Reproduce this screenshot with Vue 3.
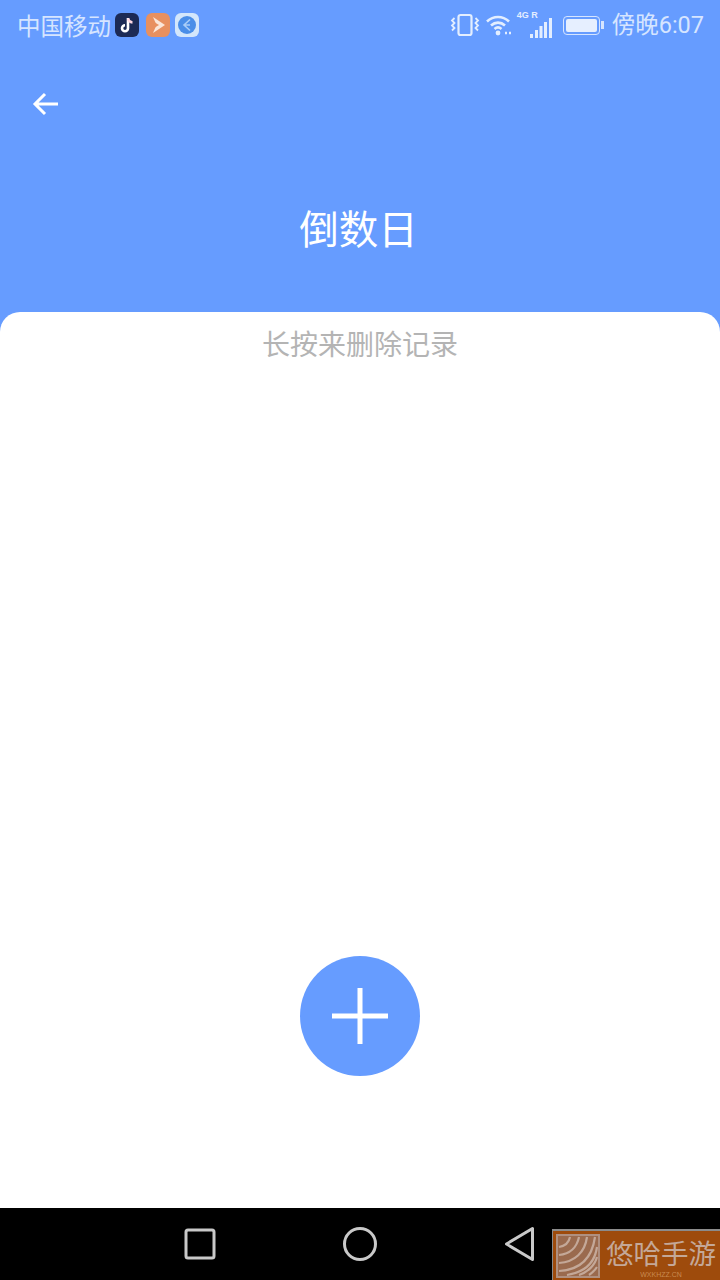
<script setup>
// Countdown list screen, empty state
const carrier = '中国移动'
const clock = '傍晚6:07'
</script>

<template>
  <div class="screen">
    <header class="head">
      <div class="status">
        <div class="status-left">
          <span class="status-text">{{ carrier }}</span>
          <span class="app-icon tiktok">
            <svg viewBox="0 0 24 24" width="24" height="24">
              <path d="M13 5v10.200a3 3 0 1 1-3-3" fill="none" stroke="#fff" stroke-width="2.600" />
              <path d="M13 5.500c.5 2.400 2 3.800 4.500 4" fill="none" stroke="#ffd9e4" stroke-width="2.400" />
            </svg>
          </span>
          <span class="app-icon video">
            <svg viewBox="0 0 24 24" width="24" height="24">
              <path d="M7 4l12 8-12 8 3.500-8z" fill="#fbe6d8" />
              <path d="M8 9l5 3-5 3z" fill="#e8905f" />
            </svg>
          </span>
          <span class="app-icon browser">
            <svg viewBox="0 0 24 24" width="24" height="24">
              <circle cx="12" cy="12" r="9" fill="#4a8ee8" />
              <path d="M15 6.500L9 12l6 5.500M15 12h-5" fill="none" stroke="#a9cdf7" stroke-width="1.600" />
            </svg>
          </span>
        </div>
        <div class="status-right">
          <svg class="ico-vibrate" viewBox="0 0 30 24" width="30" height="24">
            <rect x="8.500" y="2" width="13" height="20" rx="2" fill="none" stroke="#e3eeff" stroke-width="2.200" />
            <path d="M4.500 5l-2.500 2.500 2.500 2.500-2.500 2.500 2.500 2.500-2.500 2.500M25.500 5l2.500 2.500-2.500 2.500 2.500 2.500-2.500 2.500 2.500 2.500" fill="none" stroke="#e3eeff" stroke-width="1.800" />
          </svg>
          <svg class="ico-wifi" viewBox="0 0 28 24" width="28" height="24">
            <path d="M2 8.500c6.500-6 15.500-6 22 0M6 12.500c4.200-3.800 9.800-3.800 14 0M9.500 16c2.200-2 4.800-2 7 0" fill="none" stroke="#e3eeff" stroke-width="2.600" />
            <circle cx="13" cy="20" r="2.400" fill="#e3eeff" />
            <path d="M20 20h2M24 20h2" stroke="#e3eeff" stroke-width="2.400" />
          </svg>
          <div class="signal">
            <span class="net">4G R</span>
            <svg viewBox="0 0 24 24" width="24" height="24">
              <path d="M2.500 22v-4M7.500 22v-8M12 22v-12M16.500 22v-16M21.500 22v-20" stroke="#e3eeff" stroke-width="3" fill="none" />
            </svg>
          </div>
          <div class="battery">
            <span class="battery-body"><span class="battery-fill"></span></span>
            <span class="battery-cap"></span>
          </div>
          <span class="status-text">{{ clock }}</span>
        </div>
      </div>
      <button type="button" class="back" aria-label="返回">
        <svg viewBox="0 0 30 30" width="30" height="30">
          <path d="M28 15H5M15 5L5 15l10 10" fill="none" stroke="#fff" stroke-width="3" />
        </svg>
      </button>
      <h1 class="title">倒数日</h1>
    </header>

    <main class="card">
      <p class="hint">长按来删除记录</p>
      <button type="button" class="add" aria-label="添加">
        <svg viewBox="0 0 120 120" width="120" height="120">
          <path d="M60 32v56M32 60h56" stroke="#fff" stroke-width="5" />
        </svg>
      </button>
    </main>

    <nav class="nav">
      <svg viewBox="0 0 32 32" width="32" height="32">
        <rect x="2" y="2" width="28" height="28" rx="2" fill="none" stroke="#c9c9c9" stroke-width="3" />
      </svg>
      <svg viewBox="0 0 36 36" width="36" height="36">
        <circle cx="18" cy="18" r="15.500" fill="none" stroke="#c9c9c9" stroke-width="3" />
      </svg>
      <svg viewBox="0 0 32 36" width="32" height="36">
        <path d="M28.500 2.500v31L2.500 18z" fill="none" stroke="#c9c9c9" stroke-width="3" stroke-linejoin="round" />
      </svg>
    </nav>

    <div class="mark">
      <svg class="mark-logo" viewBox="0 0 44 44" width="44" height="44">
        <rect x="1" y="1" width="42" height="42" fill="#9a6a4e" stroke="#b09080" stroke-width="2" />
        <path d="M3 13C9 12 13 8 14 3M3 21C14 20 21 13 23 3M3 29C19 28 29 18 31 3M3 37C24 36 36 24 39 3M11 41C30 38 39 28 41 13M23 41C32 38 39 31 41 23M33 41C36 39 39 36 41 33" fill="none" stroke="#c4a898" stroke-width="2.200" />
      </svg>
      <div class="mark-text">
        <span class="mark-name">悠哈手游</span>
        <span class="mark-url">WXKHZZ.CN</span>
      </div>
    </div>
  </div>
</template>

<style scoped>
.screen {
  position: relative;
  display: flex;
  flex-direction: column;
  width: 720px;
  height: 1280px;
  overflow: hidden;
  background: #669cff;
  font-family: "Noto Sans CJK SC", "Liberation Sans", sans-serif;
}

.head {
  display: flex;
  flex-direction: column;
  height: 312px;
  flex-shrink: 0;
}

.status {
  display: flex;
  justify-content: space-between;
  align-items: center;
  height: 50px;
  padding: 0 16px 0 17px;
}

.status-left,
.status-right {
  display: flex;
  align-items: center;
}

.status-text {
  font-size: 23.5px;
  line-height: 50px;
  color: #d6e5ff;
}

.status-left .status-text {
  margin-top: -1px;
}

.status-right .status-text {
  font-family: Roboto, "Noto Sans CJK SC", sans-serif;
}

.app-icon {
  display: flex;
  width: 24px;
  height: 24px;
  border-radius: 6px;
}

.tiktok {
  margin-left: 4px;
  background: #1c2a55;
}

.video {
  margin-left: 7px;
  background: #e8905f;
}

.browser {
  margin-left: 5px;
  background: #d3e6fb;
}

.ico-vibrate {
  margin-right: 5px;
}

.signal {
  position: relative;
  width: 36px;
  height: 30px;
  margin-left: 4px;
  display: flex;
  justify-content: flex-end;
  align-items: flex-end;
}

.net {
  position: absolute;
  left: 0;
  top: 0;
  font-family: "Liberation Sans", sans-serif;
  font-size: 9px;
  font-weight: 700;
  line-height: 10px;
  color: #e3eeff;
}

.battery {
  display: flex;
  align-items: center;
  margin: 0 8px 0 10px;
}

.battery-body {
  display: block;
  width: 37px;
  height: 19px;
  padding: 2px;
  border: 1px solid #d6e5ff;
  border-radius: 4px;
  box-sizing: border-box;
}

.battery-fill {
  display: block;
  height: 100%;
  border-radius: 2px;
  background: #e6efff;
}

.battery-cap {
  width: 3px;
  height: 8px;
  margin-left: 1px;
  background: #d6e5ff;
}

.back {
  align-self: flex-start;
  display: flex;
  margin: 39px 0 0 30px;
  padding: 0;
  border: 0;
  background: none;
}

.title {
  margin: 83px 3px 0 0;
  font-size: 39.5px;
  font-weight: 400;
  line-height: 50px;
  text-align: center;
  color: #fff;
}

.card {
  flex: 1;
  display: flex;
  flex-direction: column;
  align-items: center;
  border-radius: 20px 20px 0 0;
  background: #fff;
}

.hint {
  margin: 10px 0 0;
  font-size: 28px;
  line-height: 42px;
  color: #b4b4b4;
}

.add {
  display: flex;
  margin: 592px 0 0;
  padding: 0;
  border: 0;
  border-radius: 50%;
  background: #669cff;
}

.nav {
  display: flex;
  justify-content: center;
  align-items: center;
  height: 72px;
  flex-shrink: 0;
  background: #000;
}

.nav svg:nth-child(1) {
  margin-right: 126px;
}

.nav svg:nth-child(3) {
  margin-left: 126px;
}

.mark {
  position: absolute;
  right: 0;
  bottom: 0;
  display: flex;
  align-items: center;
  box-sizing: border-box;
  width: 168px;
  height: 51px;
  padding: 0 0 0 3px;
  border-top: 2px solid #8b8b8b;
  border-left: 1px solid #8b8b8b;
  background: #9e4b0c;
}

.mark-text {
  display: flex;
  flex-direction: column;
  align-items: center;
  margin-left: 6px;
}

.mark-name {
  font-family: "Noto Sans CJK SC", sans-serif;
  font-size: 27.5px;
  line-height: 38px;
  white-space: nowrap;
  color: #c4a898;
}

.mark-url {
  font-family: "Liberation Sans", sans-serif;
  font-size: 7px;
  line-height: 8px;
  color: #c98a50;
}
</style>
